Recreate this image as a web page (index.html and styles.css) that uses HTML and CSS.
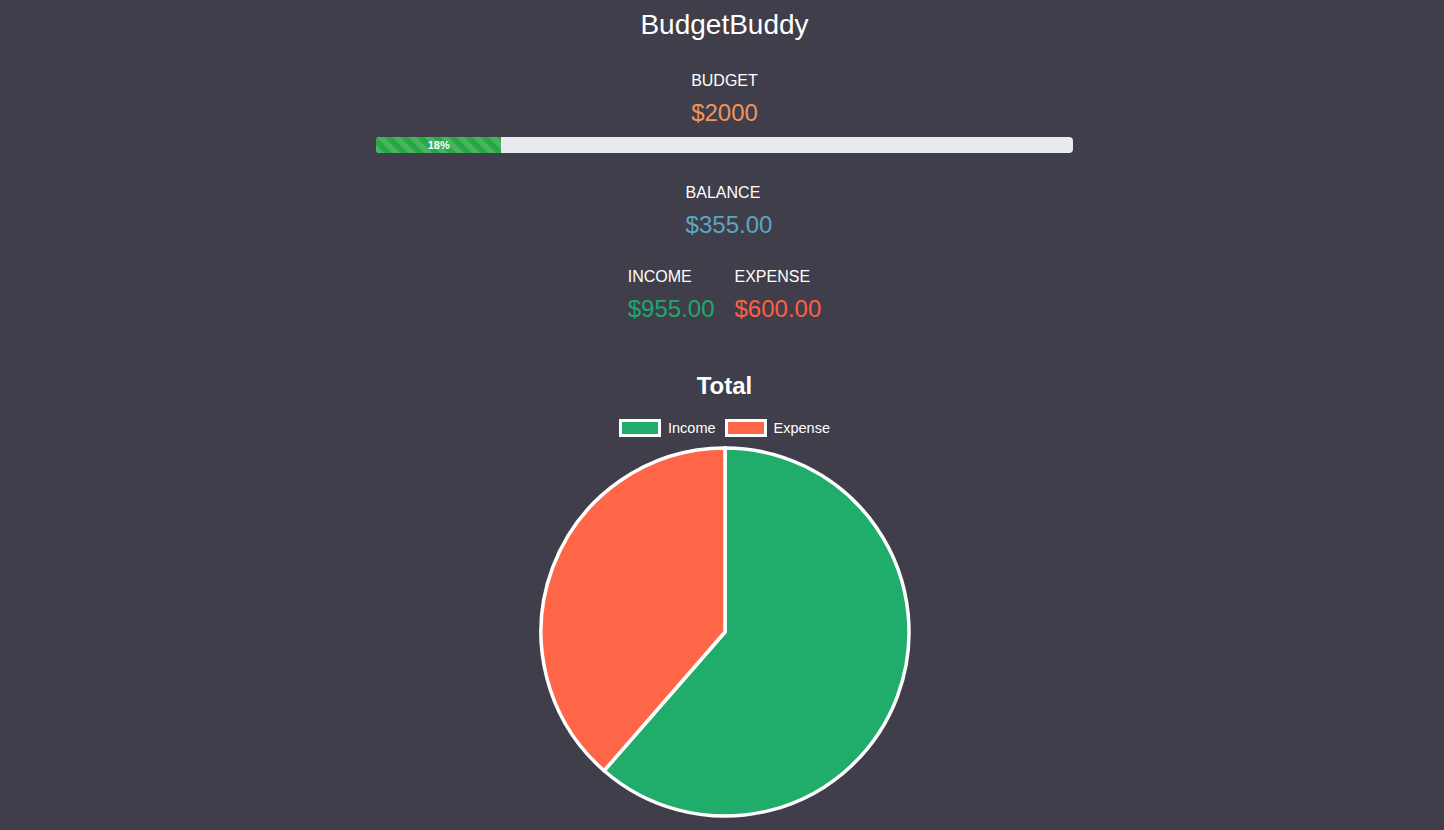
FILE: index.html
```html
<!DOCTYPE html>
<html lang="en">
<head>
<meta charset="utf-8">
<title>BudgetBuddy</title>
<link rel="stylesheet" href="styles.css">
</head>
<body>
<main class="app">
  <h1 class="title">BudgetBuddy</h1>

  <section class="stat stat-budget">
    <div class="label">BUDGET</div>
    <div class="value value-budget">$2000</div>
  </section>

  <div class="progress">
    <div class="progress-bar" style="width: 18%">18%</div>
  </div>

  <section class="stat stat-balance">
    <div class="label">BALANCE</div>
    <div class="value value-balance">$355.00</div>
  </section>

  <section class="split">
    <div class="stat">
      <div class="label">INCOME</div>
      <div class="value value-income">$955.00</div>
    </div>
    <div class="stat">
      <div class="label">EXPENSE</div>
      <div class="value value-expense">$600.00</div>
    </div>
  </section>

  <section class="chart">
    <h2 class="chart-title">Total</h2>
    <div class="legend">
      <span class="legend-item"><span class="swatch swatch-income"></span>Income</span>
      <span class="legend-item"><span class="swatch swatch-expense"></span>Expense</span>
    </div>
    <svg class="pie" width="380" height="380" viewBox="0 0 380 380">
      <path d="M190 190 L190 6 A184 184 0 1 1 69.1 328.7 Z" fill="#20ad6b" stroke="#fff" stroke-width="3.5" stroke-linejoin="miter"/>
      <path d="M190 190 L69.1 328.7 A184 184 0 0 1 190 6 Z" fill="#ff6648" stroke="#fff" stroke-width="3.5" stroke-linejoin="miter"/>
    </svg>
  </section>
</main>
</body>
</html>
```

FILE: styles.css
```css
* { box-sizing: border-box; }

html, body {
  margin: 0;
  padding: 0;
  background: #403e4a;
  height: 100%;
}

body {
  font-family: "Liberation Sans", Arial, sans-serif;
  color: #fff;
  overflow: hidden;
}

.app {
  display: flex;
  flex-direction: column;
  align-items: center;
  padding-left: 5px;
}

.title {
  margin: 9px 0 0;
  font-size: 28px;
  line-height: 32px;
  font-weight: 400;
}

.stat {
  display: flex;
  flex-direction: column;
  align-items: flex-start;
}

.stat-budget { margin-top: 30px; }
.stat-balance { margin-top: 30px; padding-left: 9px; }

.label {
  font-size: 16px;
  line-height: 20px;
}

.value {
  margin-top: 8px;
  font-size: 24px;
  line-height: 28px;
}

.value-budget { color: #f0955b; }
.value-balance { color: #5aa6c4; }
.value-income { color: #20a86a; }
.value-expense { color: #ff5e40; }

.progress {
  margin-top: 10px;
  width: 697px;
  height: 16px;
  background: #e9ecef;
  border-radius: 4px;
  overflow: hidden;
  display: flex;
}

.progress-bar {
  background-color: #28a745;
  background-image: linear-gradient(45deg, rgba(255,255,255,.15) 25%, transparent 25%, transparent 50%, rgba(255,255,255,.15) 50%, rgba(255,255,255,.15) 75%, transparent 75%, transparent);
  background-size: 16px 16px;
  color: #fff;
  font-size: 11px;
  font-weight: 700;
  line-height: 16px;
  text-align: center;
}

.split {
  margin-top: 28px;
  display: flex;
  gap: 20px;
}

.chart {
  margin-top: 48px;
  display: flex;
  flex-direction: column;
  align-items: center;
}

.chart-title {
  margin: 0;
  font-size: 24px;
  line-height: 30px;
  font-weight: 700;
}

.legend {
  margin-top: 17px;
  display: flex;
  gap: 9px;
  font-size: 14.5px;
  line-height: 20px;
}

.legend-item {
  display: flex;
  align-items: center;
  gap: 7px;
}

.swatch {
  width: 42px;
  height: 18px;
  border: 3px solid #fff;
}

.swatch-income { background: #20ad6b; }
.swatch-expense { background: #ff6648; }

.pie {
  margin-top: 4px;
  display: block;
}
```
